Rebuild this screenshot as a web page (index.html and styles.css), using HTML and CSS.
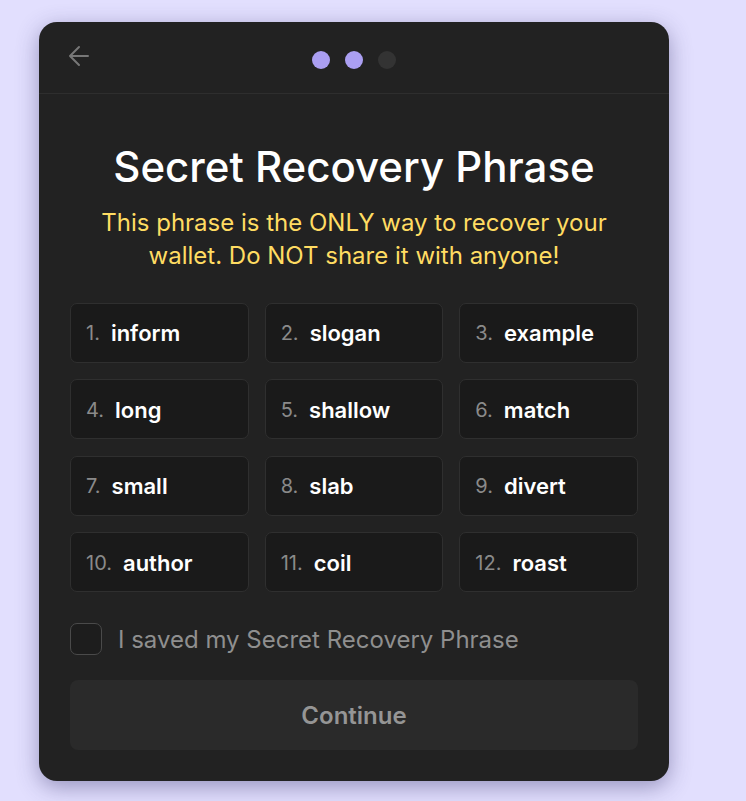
FILE: index.html
```html
<!DOCTYPE html>
<html>
<head>
<meta charset="utf-8">
<link rel="stylesheet" href="styles.css">
</head>
<body>
<div class="card">
  <div class="header">
    <svg class="back" width="24" height="24" viewBox="0 0 24 24" fill="none" stroke="#777" stroke-width="2" stroke-linecap="round" stroke-linejoin="round"><path d="M21 12H3M12 3L3 12l9 9"/></svg>
    <div class="dots">
      <span class="dot on"></span><span class="dot on"></span><span class="dot"></span>
    </div>
  </div>
  <div class="body">
    <h1 class="title">Secret Recovery Phrase</h1>
    <p class="subtitle">This phrase is the ONLY way to recover your wallet. Do NOT share it with anyone!</p>
    <div class="grid">
      <div class="cell"><span class="num">1.</span><span class="word">inform</span></div>
      <div class="cell"><span class="num">2.</span><span class="word">slogan</span></div>
      <div class="cell"><span class="num">3.</span><span class="word">example</span></div>
      <div class="cell"><span class="num">4.</span><span class="word">long</span></div>
      <div class="cell"><span class="num">5.</span><span class="word">shallow</span></div>
      <div class="cell"><span class="num">6.</span><span class="word">match</span></div>
      <div class="cell"><span class="num">7.</span><span class="word">small</span></div>
      <div class="cell"><span class="num">8.</span><span class="word">slab</span></div>
      <div class="cell"><span class="num">9.</span><span class="word">divert</span></div>
      <div class="cell"><span class="num">10.</span><span class="word">author</span></div>
      <div class="cell"><span class="num">11.</span><span class="word">coil</span></div>
      <div class="cell"><span class="num">12.</span><span class="word">roast</span></div>
    </div>
    <label class="check"><span class="box"></span><span class="check-label">I saved my Secret Recovery Phrase</span></label>
    <button class="continue">Continue</button>
  </div>
</div>
</body>
</html>
```
FILE: styles.css
```css
html, body {
  margin: 0;
  padding: 0;
}
body {
  background: #e2dffe;
  font-family: Inter, "Noto Sans", sans-serif;
  width: 746px;
  height: 801px;
  overflow: hidden;
}
.card {
  margin: 22px 0 0 39px;
  width: 630px;
  height: 759px;
  background: #222222;
  border-radius: 18px;
  box-shadow: 0 6px 22px rgba(60, 55, 110, 0.45);
  display: flex;
  flex-direction: column;
  overflow: hidden;
}
.header {
  height: 72px;
  border-bottom: 1px solid #2e2e2e;
  display: flex;
  align-items: center;
  justify-content: center;
  position: relative;
  box-sizing: border-box;
  padding-top: 5px;
}
.back {
  position: absolute;
  left: 28px;
  top: 22px;
}
.dots {
  display: flex;
  gap: 15px;
  margin-left: 0;
}
.dot {
  width: 18px;
  height: 18px;
  border-radius: 50%;
  background: #333333;
}
.dot.on {
  background: #ab9ff2;
}
.body {
  padding: 0 31px 31px;
  display: flex;
  flex-direction: column;
}
.title {
  margin: 49px 0 0;
  font-size: 42px;
  line-height: 48px;
  font-weight: 500;
  color: #ffffff;
  text-align: center;
}
.subtitle {
  margin: 15px 0 0;
  font-size: 24px;
  line-height: 33px;
  color: #ffdc62;
  text-align: center;
  padding: 0 24px;
}
.grid {
  margin-top: 31px;
  display: grid;
  grid-template-columns: repeat(3, 1fr);
  column-gap: 16px;
  row-gap: 16.5px;
}
.cell {
  height: 60px;
  box-sizing: border-box;
  background: #1a1a1a;
  border: 1px solid #2f2f2f;
  border-radius: 7px;
  display: flex;
  align-items: center;
  padding-left: 15px;
  padding-top: 1px;
}
.num {
  font-size: 20px;
  color: #8a8a8a;
  margin-right: 11px;
}
.word {
  font-size: 22px;
  font-weight: 600;
  color: #ffffff;
}
.check {
  margin-top: 31px;
  display: flex;
  align-items: center;
  gap: 16px;
}
.box {
  width: 32px;
  height: 32px;
  box-sizing: border-box;
  border: 1px solid #4a4a4a;
  border-radius: 7px;
  background: #1d1d1d;
}
.check-label {
  font-size: 24px;
  color: #8f8f8f;
}
.continue {
  margin-top: 25px;
  height: 70px;
  border: none;
  border-radius: 8px;
  background: #2a2a2a;
  color: #959595;
  font-family: Inter, "Noto Sans", sans-serif;
  font-size: 24px;
  font-weight: 600;
}
```
